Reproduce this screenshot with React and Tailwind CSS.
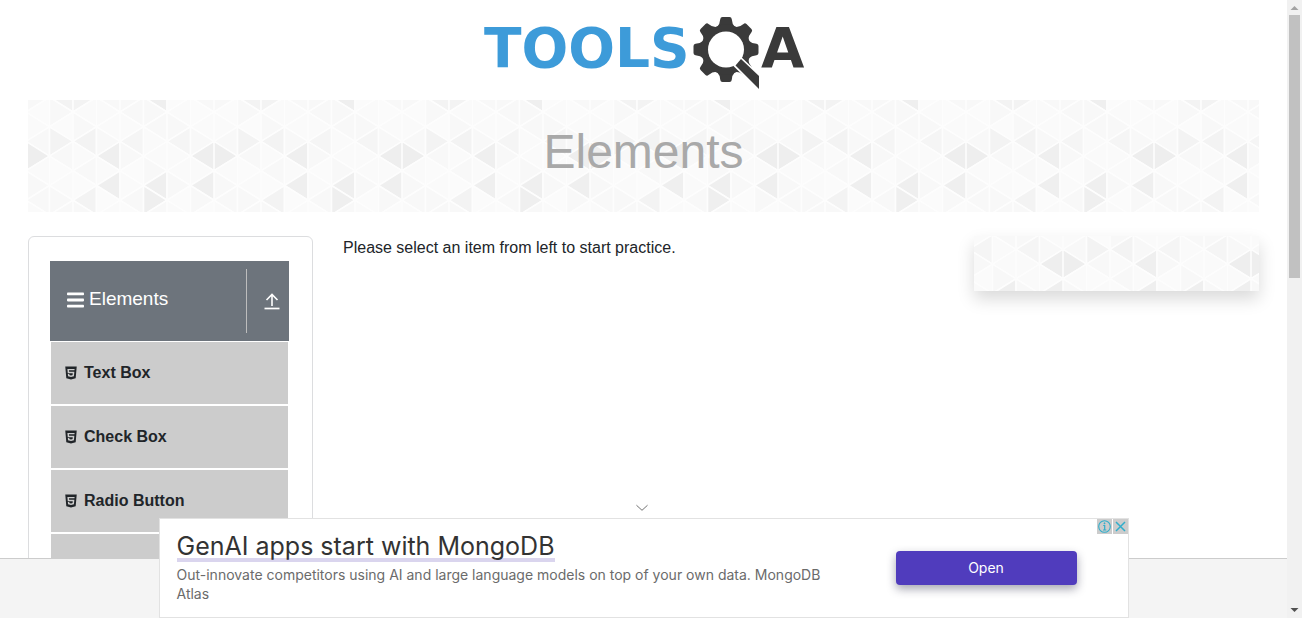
import React from "react";
import { AiFillHtml5 } from "react-icons/ai";

const COL = 23.5;
const HALF = 14.7;
const STRIPS = 8;
const ROWS = 10;

// Shaded triangles, keyed by direction, strip and apex row.
const SHADES = {
  R0_3: "#eeeeee", R1_2: "#f3f3f3", L1_9: "#f3f3f3", L2_2: "#f3f3f3",
  R2_9: "#f3f3f3", L2_6: "#f3f3f3", L3_3: "#efefef", L3_5: "#efefef",
  L4_2: "#f5f5f5", L5_9: "#efefef", L5_5: "#efefef", R5_6: "#efefef",
  L6_2: "#f5f5f5", L7_3: "#eeeeee", L7_5: "#efefef",
};
const LIGHT = ["#fbfbfb", "#f8f8f8", "#fafafa", "#f8f8f8", "#fafafa"];

function tileTriangles() {
  const out = [];
  for (let i = 0; i < STRIPS; i++) {
    for (let h = -1; h <= ROWS; h++) {
      const row = (h + ROWS) % ROWS;
      const right = (h + 20) % 2 === (i + 1) % 2;
      const key = (right ? "R" : "L") + i + "_" + row;
      const fill = SHADES[key] || LIGHT[(i * 2 + row * 3 + (right ? 1 : 0)) % 5];
      const apexX = (right ? i + 1 : i) * COL;
      const edgeX = (right ? i : i + 1) * COL;
      const y = h * HALF;
      out.push(
        <polygon
          key={i + "_" + h}
          points={`${apexX},${y} ${edgeX},${y - HALF} ${edgeX},${y + HALF}`}
          fill={fill}
          stroke="#fdfdfd"
          strokeWidth="1.6"
        />
      );
    }
  }
  return out;
}

function Triangles({ id, x, y }) {
  return (
    <svg className="absolute inset-0 h-full w-full" aria-hidden="true">
      <defs>
        <pattern id={id} x={x} y={y} width={COL * STRIPS} height={HALF * ROWS} patternUnits="userSpaceOnUse">
          {tileTriangles()}
        </pattern>
      </defs>
      <rect width="100%" height="100%" fill={`url(#${id})`} />
    </svg>
  );
}

function Logo() {
  return (
    <svg width="322" height="76" viewBox="484 15 322 76" role="img" aria-label="TOOLSQA">
      <text x="484" y="67" fontSize="55" fontWeight="700" fill="#3d9bd9" fontFamily="'DejaVu Sans', sans-serif">TOOLS</text>
      <g fill="#3a3a3a">
        {[0, 45, 90, 135, 180, 225, 270, 315].map((a) => (
          <path
            key={a}
            transform={`rotate(${a} 726 49.5)`}
            d="M717 27 Q720 24 720.300 19 Q720.500 17 722.500 17 H729.500 Q731.500 17 731.700 19 Q732 24 735 27 Z"
          />
        ))}
        <circle cx="726" cy="49.500" r="25" />
      </g>
      <circle cx="726" cy="49.500" r="18" fill="#fff" />
      <path d="M735 65.500 L741 59 L765 81.500 V95 Z" fill="#fff" stroke="#fff" strokeWidth="3" />
      <path d="M735.500 65.500 L741 59 L759 76 V89 Z" fill="#3a3a3a" />
      <text x="761" y="67" fontSize="56" fontWeight="700" fill="#3a3a3a" fontFamily="'DejaVu Sans', sans-serif">A</text>
    </svg>
  );
}

function Sidebar() {
  return (
    <nav className="rounded-md border border-[#dcdddf] py-6 pr-[23px] pl-[21px]">
      <button type="button" className="flex h-20 w-full items-center bg-[#6d747c] text-left text-white">
        <span className="flex flex-1 items-center gap-1 pb-1 pl-4 text-[19px] leading-6">
          <svg width="19" height="16" viewBox="0 0 19 16" fill="currentColor" className="mt-0.5" aria-hidden="true">
            <rect x="1" y="0.500" width="17" height="2.800" rx="0.800" />
            <rect x="1" y="6.600" width="17" height="2.800" rx="0.800" />
            <rect x="1" y="12.700" width="17" height="2.800" rx="0.800" />
          </svg>
          Elements
        </span>
        <span className="flex h-16 w-[43px] items-center justify-center border-l border-[#bdbdbd] pl-2">
          <svg width="16" height="18" viewBox="0 0 16 18" fill="none" stroke="currentColor" aria-hidden="true">
            <path d="M8 14 V3 M2.500 8 L8 2.500 L13.500 8" strokeWidth="1.600" />
            <path d="M0.500 16.500 H15.500" strokeWidth="1.700" />
          </svg>
        </span>
      </button>
      <ul>
        {["Text Box", "Check Box", "Radio Button"].map((label) => (
          <li key={label} className="border border-white">
            <a href="#" className="flex h-[62px] items-center gap-[5px] bg-[#ccc] pl-3 text-base font-bold text-[#212529]">
              <AiFillHtml5 size={16} aria-hidden="true" />
              {label}
            </a>
          </li>
        ))}
        <li className="h-16 border border-white bg-[#ccc]" />
      </ul>
    </nav>
  );
}

function Ad() {
  return (
    <aside className="absolute bottom-0 left-1/2 flex h-[100px] w-[970px] -translate-x-1/2 border border-[#e2e2e2] bg-white font-['Inter',sans-serif]">
      <button type="button" aria-label="Collapse" className="absolute -top-[17px] left-1/2 -ml-2 flex h-3 w-3 items-center justify-center">
        <svg width="13" height="8" viewBox="0 0 13 8" fill="none" stroke="#666" aria-hidden="true">
          <path d="M0.500 1 L6.500 6.500 L12.500 1" />
        </svg>
      </button>
      <div className="w-[720px] pt-4 pl-[17px]">
        <a href="#" className="block w-fit border-b-4 border-[#dad5ee] text-[25px] leading-[23px] text-[#333]">
          GenAI apps start with MongoDB
        </a>
        <p className="w-[680px] pt-[3px] text-[14px] leading-[19px] text-[#6b6b6b]">
          Out-innovate competitors using AI and large language models on top of your own data. MongoDB Atlas
        </p>
      </div>
      <div className="flex-1 pt-8 pl-4">
        <button type="button" className="h-[34px] w-[181px] rounded bg-[#503cbd] text-sm text-white shadow-[0_4px_10px_rgba(30,30,60,0.4)]">
          Open
        </button>
      </div>
      <div className="absolute top-0 right-0 flex gap-px">
        <button type="button" aria-label="Ad information" className="h-[15px] w-[15px] bg-[#ccc]">
          <svg width="15" height="15" viewBox="0 0 15 15" fill="none" stroke="#30aecb" aria-hidden="true">
            <circle cx="7.500" cy="7.500" r="5.800" strokeWidth="1.100" />
            <path d="M6.200 6.500 H7.700 V11 M6 11 H9.300" strokeWidth="1.200" />
            <circle cx="7.500" cy="4.300" r="0.500" fill="#30aecb" />
          </svg>
        </button>
        <button type="button" aria-label="Close ad" className="h-[15px] w-[15px] bg-[#ccc]">
          <svg width="15" height="15" viewBox="0 0 15 15" fill="none" stroke="#30aecb" strokeWidth="1.500" aria-hidden="true">
            <path d="M3 3 L12 12 M12 3 L3 12" />
          </svg>
        </button>
      </div>
    </aside>
  );
}

function Scrollbar() {
  return (
    <div className="flex w-[15px] shrink-0 flex-col items-center justify-between bg-[#f1f1f1]" aria-hidden="true">
      <div className="flex h-full w-full flex-col items-center">
        <svg width="15" height="15" viewBox="0 0 15 15" className="shrink-0">
          <path d="M3.500 10 L7.500 6 L11.500 10 Z" fill="#a3a3a3" />
        </svg>
        <div className="h-[263px] w-[11px] bg-[#c1c1c1]" />
      </div>
      <svg width="15" height="15" viewBox="0 0 15 15" className="shrink-0">
        <path d="M3.500 5 L7.500 9 L11.500 5 Z" fill="#505050" />
      </svg>
    </div>
  );
}

export default function App() {
  return (
    <div className="flex h-screen bg-white font-['Liberation_Sans',Arial,sans-serif] text-[#212529]">
      <div className="relative flex min-w-0 flex-1 flex-col">
        <div className="min-h-0 flex-1 overflow-hidden px-7">
          <header className="flex h-[100px] justify-center pt-[15px] pl-[3px]">
            <a href="#" className="block h-[76px]"><Logo /></a>
          </header>
          <div className="relative flex h-28 items-center justify-center">
            <Triangles id="banner-triangles" x={-2} y={12} />
            <h1 className="relative pb-2 text-5xl text-[#a9a9a9]">Elements</h1>
          </div>
          <main className="grid grid-cols-[285px_1fr_285px] items-start gap-[30px] pt-6">
            <Sidebar />
            <p className="text-base leading-6">Please select an item from left to start practice.</p>
            <div className="relative h-[55px] shadow-[0_8px_16px_rgba(0,0,0,0.15)]">
              <Triangles id="panel-triangles" x={89} y={-16} />
            </div>
          </main>
        </div>
        <footer className="h-[60px] shrink-0 border-t border-[#ccc] bg-[#f4f4f4]" />
        <Ad />
      </div>
      <Scrollbar />
    </div>
  );
}
